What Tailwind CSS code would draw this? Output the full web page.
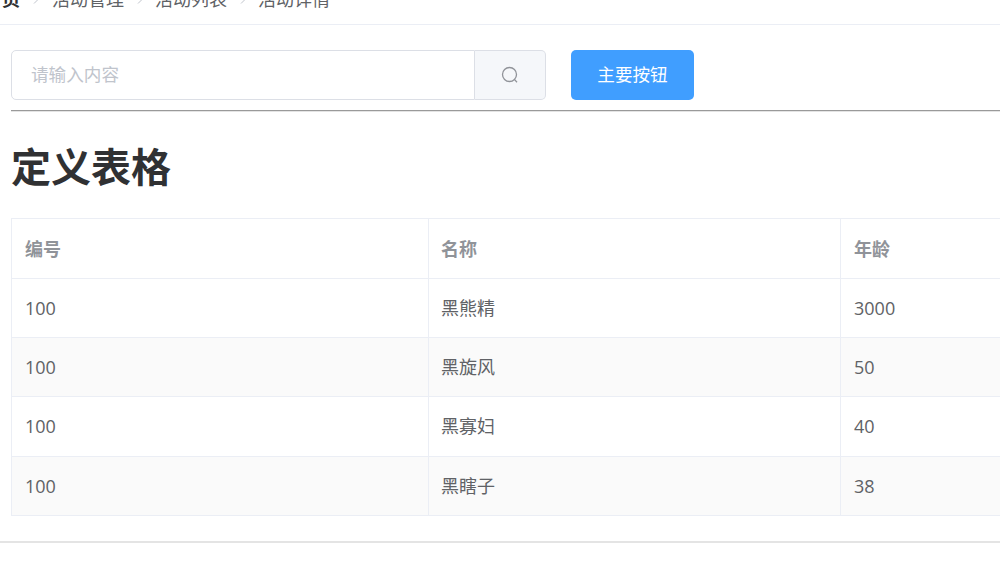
<!DOCTYPE html>
<html lang="en">
<head>
  <meta charset="UTF-8">
  <meta name="viewport" content="width=device-width, initial-scale=1.0">
  <script src="https://cdn.jsdelivr.net/npm/@tailwindcss/browser@4"></script>
  <title>定义表格</title>
</head>
<body class="bg-white overflow-hidden h-[576px] font-['Open_Sans','Noto_Sans_CJK_SC',sans-serif] text-[18px] text-[#606266]">

  <div class="-mt-[27px]">
    <!-- breadcrumb, scrolled partly out of view -->
    <div class="h-[52px] pt-[1px] flex items-center border-b border-[#ebeef5] whitespace-nowrap">
      <span class="-ml-[16px] font-bold text-[#303133]">首页</span>
      <svg class="w-[12px] h-[12px] mx-[10px] text-[#c0c4cc]" viewBox="0 0 12 12" fill="none" stroke="currentColor" stroke-width="1"><path d="M4 1.5 8.5 6 4 10.5"/></svg>
      <span>活动管理</span>
      <svg class="w-[12px] h-[12px] mx-[9.5px] text-[#c0c4cc]" viewBox="0 0 12 12" fill="none" stroke="currentColor" stroke-width="1"><path d="M4 1.5 8.5 6 4 10.5"/></svg>
      <span>活动列表</span>
      <svg class="w-[12px] h-[12px] mx-[9.5px] text-[#c0c4cc]" viewBox="0 0 12 12" fill="none" stroke="currentColor" stroke-width="1"><path d="M4 1.5 8.5 6 4 10.5"/></svg>
      <span>活动详情</span>
    </div>

    <div class="pl-[11px] pt-[25px]">
      <!-- search + button -->
      <div class="flex gap-[25px]">
        <div class="flex w-[535px] h-[50px]">
          <input type="text" placeholder="请输入内容" class="w-[464px] h-full pl-[19px] pb-[2px] border border-[#dcdfe6] rounded-l-[5px] text-[17.6px] placeholder:text-[#c0c4cc] outline-none">
          <button type="button" class="w-[71px] h-full flex items-center justify-center bg-[#f5f7fa] border border-l-0 border-[#dcdfe6] rounded-r-[5px] text-[#909399]">
            <svg class="w-[18px] h-[18px]" viewBox="0 0 18 18" fill="none" stroke="currentColor" stroke-width="1.3"><circle cx="8.5" cy="8.5" r="7"/><path d="M13.6 13.6 16 16.2"/></svg>
          </button>
        </div>
        <button type="button" class="w-[123px] h-[50px] pb-[2px] bg-[#409eff] text-white text-[17.6px] rounded-[5px]">主要按钮</button>
      </div>

      <hr class="mt-[10px] border-t border-b border-t-[#9a9a9a] border-b-[#e4e4e4] h-[2px]">

      <h1 class="mt-[26px] text-[40px] leading-[58px] font-bold text-[#303133]">定义表格</h1>

      <table class="mt-[22px] w-[1240px] table-fixed border-collapse border border-[#ebeef5]">
        <thead>
          <tr class="h-[60px] text-[#909399] font-bold text-left">
            <th class="w-[417px] pl-[13px] pt-[2px] border border-[#ebeef5]">编号</th>
            <th class="w-[412px] pl-[12px] pt-[2px] border border-[#ebeef5]">名称</th>
            <th class="pl-[13px] pt-[2px] border border-[#ebeef5]">年龄</th>
          </tr>
        </thead>
        <tbody>
          <tr class="h-[59px]">
            <td class="pl-[13px] border border-[#ebeef5]">100</td>
            <td class="pl-[12px] border border-[#ebeef5]">黑熊精</td>
            <td class="pl-[13px] border border-[#ebeef5]">3000</td>
          </tr>
          <tr class="h-[59px] bg-[#fafafa]">
            <td class="pl-[13px] border border-[#ebeef5]">100</td>
            <td class="pl-[12px] border border-[#ebeef5]">黑旋风</td>
            <td class="pl-[13px] border border-[#ebeef5]">50</td>
          </tr>
          <tr class="h-[60px]">
            <td class="pl-[13px] border border-[#ebeef5]">100</td>
            <td class="pl-[12px] border border-[#ebeef5]">黑寡妇</td>
            <td class="pl-[13px] border border-[#ebeef5]">40</td>
          </tr>
          <tr class="h-[59px] bg-[#fafafa]">
            <td class="pl-[13px] border border-[#ebeef5]">100</td>
            <td class="pl-[12px] border border-[#ebeef5]">黑瞎子</td>
            <td class="pl-[13px] border border-[#ebeef5]">38</td>
          </tr>
        </tbody>
      </table>
    </div>

    <hr class="mt-[25px] border-t-2 border-[#e4e4e4]">
  </div>

</body>
</html>
